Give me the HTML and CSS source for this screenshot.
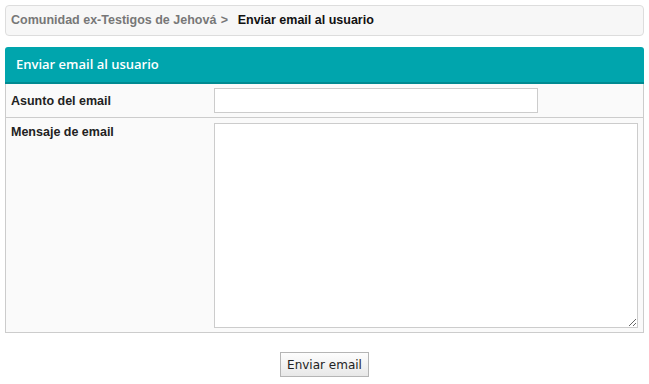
FILE: index.html
```html
<!DOCTYPE html>
<html lang="es">
<head>
  <meta charset="UTF-8">
  <title>Enviar email al usuario</title>
  <link rel="stylesheet" href="styles.css">
</head>
<body>

  <div class="crumbs">
    <a href="#">Comunidad ex-Testigos de Jehová</a>
    <span class="sep">&gt;</span>
    <span class="current">Enviar email al usuario</span>
  </div>

  <form class="panel">
    <h2 class="panel-title">Enviar email al usuario</h2>
    <table class="form-table">
      <tr>
        <th>Asunto del email</th>
        <td><input type="text" class="subject"></td>
      </tr>
      <tr class="tall">
        <th>Mensaje de email</th>
        <td><textarea class="message"></textarea></td>
      </tr>
    </table>

    <div class="actions">
      <button type="button">Enviar email</button>
    </div>
  </form>

</body>
</html>
```

FILE: styles.css
```css
body {
  margin: 5px;
  font-family: "Liberation Sans", Arial, sans-serif;
  font-size: 12.5px;
  color: #222;
  background-color: #fff;
}
.crumbs {
  height: 29px;
  line-height: 29px;
  padding: 0 5px;
  border: 1px solid #ddd;
  border-radius: 4px;
  background-color: #f7f7f7;
  font-weight: bold;
}
.crumbs a {
  color: #777;
  text-decoration: none;
}
.crumbs .sep {
  color: #777;
  margin: 0 6px 0 1px;
}
.crumbs .current {
  color: #111;
}
.panel {
  margin-top: 11px;
}
.panel-title {
  margin: 0;
  height: 35px;
  line-height: 35px;
  padding: 0 11px;
  background-color: #00a5ad;
  border-bottom: 2px solid #008a91;
  border-radius: 3px 3px 0 0;
  color: #fff;
  font-family: "Open Sans", sans-serif;
  font-size: 13px;
  font-weight: 600;
}
.form-table {
  width: 100%;
  border-collapse: collapse;
  border: 1px solid #ccc;
  border-top: none;
  background-color: #fafafa;
}
.form-table th {
  width: 200px;
  padding: 0 5px;
  text-align: left;
  vertical-align: middle;
  font-weight: bold;
  color: #222;
}
.form-table td {
  padding: 4px 5px;
}
.form-table tr + tr th,
.form-table tr + tr td {
  border-top: 1px solid #ccc;
}
.form-table .tall td {
  padding-top: 5px;
}
.form-table .tall th {
  vertical-align: top;
  padding-top: 7px;
}
.subject {
  display: block;
  box-sizing: border-box;
  width: 324px;
  height: 25px;
  margin: 0;
  border: 1px solid #ccc;
  background-color: #fff;
}
.message {
  display: block;
  box-sizing: border-box;
  width: 424px;
  height: 205px;
  margin: 0;
  border: 1px solid #ccc;
  background-color: #fff;
  resize: both;
}
.actions {
  margin-top: 19px;
  text-align: center;
}
.actions button {
  width: 89px;
  height: 25px;
  padding: 0;
  border: 1px solid #b5b5b5;
  border-radius: 0;
  background: linear-gradient(#fdfdfd, #e8e8e8);
  font-family: "DejaVu Sans", Verdana, sans-serif;
  font-size: 12px;
  color: #222;
  cursor: pointer;
}
```
